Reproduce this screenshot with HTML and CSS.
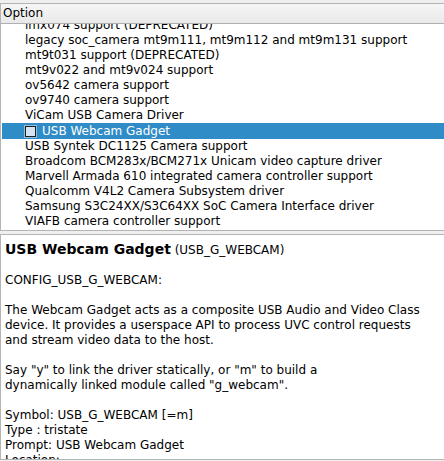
FILE: index.html
```html
<!DOCTYPE html>
<html>
<head>
<meta charset="utf-8">
<link rel="stylesheet" href="styles.css">
</head>
<body>
<div class="app">
  <div class="tree">
    <div class="header">Option</div>
    <div class="viewport">
      <div class="rows">
        <div class="row">imx074 support (DEPRECATED)</div>
        <div class="row">legacy soc_camera mt9m111, mt9m112 and mt9m131 support</div>
        <div class="row">mt9t031 support (DEPRECATED)</div>
        <div class="row">mt9v022 and mt9v024 support</div>
        <div class="row">ov5642 camera support</div>
        <div class="row">ov9740 camera support</div>
        <div class="row">ViCam USB Camera Driver</div>
        <div class="row selected"><span class="check"></span>USB Webcam Gadget</div>
        <div class="row">USB Syntek DC1125 Camera support</div>
        <div class="row">Broadcom BCM283x/BCM271x Unicam video capture driver</div>
        <div class="row">Marvell Armada 610 integrated camera controller support</div>
        <div class="row">Qualcomm V4L2 Camera Subsystem driver</div>
        <div class="row">Samsung S3C24XX/S3C64XX SoC Camera Interface driver</div>
        <div class="row">VIAFB camera controller support</div>
      </div>
    </div>
  </div>
  <div class="info">
    <div class="title"><b>USB Webcam Gadget</b> (USB_G_WEBCAM)</div>
    <div class="blank"></div>
    <div class="line">CONFIG_USB_G_WEBCAM:</div>
    <div class="blank"></div>
    <div class="line">The Webcam Gadget acts as a composite USB Audio and Video Class</div>
    <div class="line">device. It provides a userspace API to process UVC control requests</div>
    <div class="line">and stream video data to the host.</div>
    <div class="blank"></div>
    <div class="line">Say "y" to link the driver statically, or "m" to build a</div>
    <div class="line">dynamically linked module called "g_webcam".</div>
    <div class="blank"></div>
    <div class="line">Symbol: USB_G_WEBCAM [=m]</div>
    <div class="line">Type : tristate</div>
    <div class="line">Prompt: USB Webcam Gadget</div>
    <div class="line">Location:</div>
    <div class="line">-&gt; Device Drivers</div>
  </div>
</div>
</body>
</html>
```

FILE: styles.css
```css
html, body {
  margin: 0;
  padding: 0;
  background: #efefef;
}
body {
  font-family: "DejaVu Sans", sans-serif;
  font-size: 12px;
  color: #000;
  width: 444px;
  height: 461px;
  overflow: hidden;
}
.app {
  display: flex;
  flex-direction: column;
  padding-top: 3px;
  gap: 3px;
}
.tree {
  background: #fff;
  border: 1px solid #b4b4b4;
  border-right: none;
  height: 226px;
  display: flex;
  flex-direction: column;
  overflow: hidden;
}
.header {
  height: 19px;
  line-height: 19px;
  padding-left: 2px;
  background: linear-gradient(#f6f6f6, #e9e9e9);
  border-bottom: 1px solid #b0b0b0;
  flex: none;
}
.viewport {
  flex: 1;
  overflow: hidden;
}
.rows {
  margin-top: -6px;
}
.row {
  height: 15px;
  line-height: 15px;
  padding-left: 24px;
  white-space: nowrap;
}
.row.selected {
  height: 16px;
  line-height: 16px;
  background: #308cc6;
  color: #fff;
  margin-left: 1px;
  padding-left: 23px;
  display: flex;
  align-items: center;
}
.check {
  width: 9px;
  height: 9px;
  border: 1px solid #1f1f1f;
  background: #d4e4f0;
  margin-right: 6px;
  box-shadow: 0 0 0 1px #8fbfe0;
  flex: none;
}
.info {
  background: #fff;
  border: 1px solid #b4b4b4;
  border-right: none;
  height: 226px;
  overflow: hidden;
  padding: 5px 0 0 4px;
  box-sizing: border-box;
}
.title {
  height: 18px;
  line-height: 18px;
  white-space: nowrap;
}
.title b {
  font-size: 14px;
}
.line {
  height: 15px;
  line-height: 15px;
  white-space: nowrap;
}
.blank {
  height: 15px;
}
```
